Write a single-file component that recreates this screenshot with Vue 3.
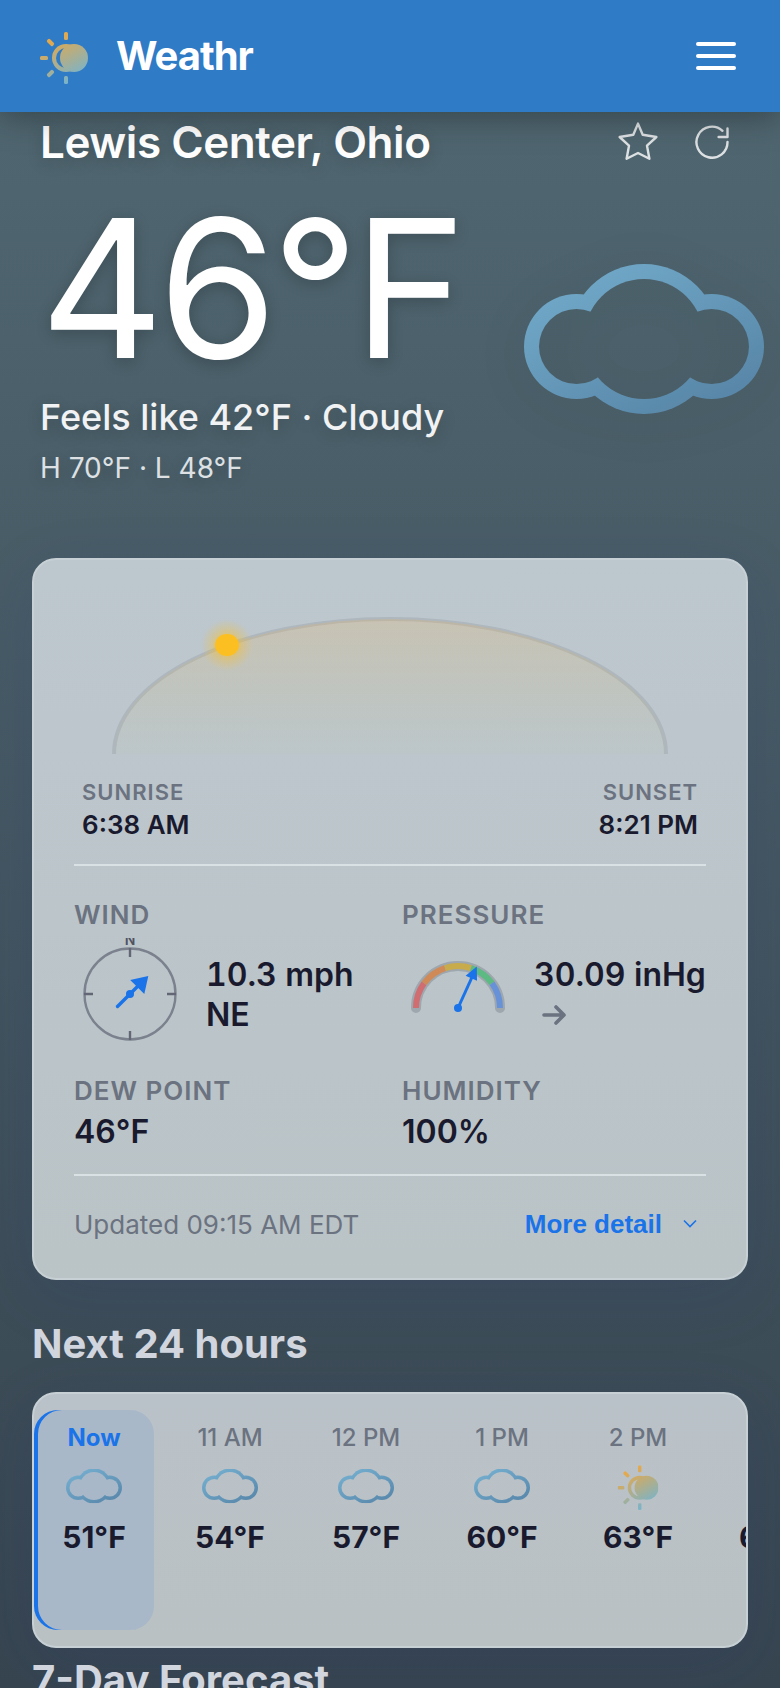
<script setup>
const hours = [
  { label: 'Now', temp: '51°F', icon: 'cloudy', now: true },
  { label: '11 AM', temp: '54°F', icon: 'cloudy' },
  { label: '12 PM', temp: '57°F', icon: 'cloudy' },
  { label: '1 PM', temp: '60°F', icon: 'cloudy' },
  { label: '2 PM', temp: '63°F', icon: 'partly' },
  { label: '3 PM', temp: '64°F', icon: 'partly' }
]

const bands = ['#cf6d71', '#d08a57', '#c8ab4b', '#5cba82', '#6792d8']

function point(deg, r) {
  const a = (deg * Math.PI) / 180
  return `${(56 - r * Math.cos(a)).toFixed(2)} ${(70 - r * Math.sin(a)).toFixed(2)}`
}

const gauge = bands.map((color, i) => ({
  color,
  d: `M${point(i * 36, 42)} A42 42 0 0 1 ${point((i + 1) * 36, 42)}`
}))
</script>

<template>
  <div class="app">
    <!-- shared weather symbols -->
    <svg class="defs" width="0" height="0" aria-hidden="true">
      <defs>
        <linearGradient id="cloud-fill" gradientUnits="userSpaceOnUse" x1="60" y1="0" x2="140" y2="160">
          <stop offset="0" stop-color="#74aecf" />
          <stop offset="1" stop-color="#5a8aad" />
        </linearGradient>
        <linearGradient id="sun-fill" gradientUnits="userSpaceOnUse" x1="14" y1="6" x2="38" y2="50">
          <stop offset="0" stop-color="#eba844" />
          <stop offset="1" stop-color="#73b4d2" />
        </linearGradient>
        <mask id="cloud-mask" maskUnits="userSpaceOnUse" x="0" y="0" width="240" height="150">
          <g fill="#fff">
            <circle cx="52.5" cy="82.5" r="52.5" />
            <circle cx="120" cy="75" r="75" />
            <circle cx="187.5" cy="82.5" r="52.5" />
          </g>
          <g fill="#000">
            <circle cx="52.5" cy="82.5" r="37.5" />
            <circle cx="120" cy="75" r="60" />
            <circle cx="187.5" cy="82.5" r="37.5" />
          </g>
        </mask>
        <mask id="partly-mask" maskUnits="userSpaceOnUse" x="0" y="0" width="48" height="56">
          <g fill="#fff">
            <circle cx="26" cy="28" r="14" />
            <rect x="24" y="2" width="4" height="8" rx="1.5" />
            <rect x="24" y="46" width="4" height="8" rx="1.5" />
            <rect x="0" y="26" width="8" height="4" rx="1.5" />
            <rect x="6.5" y="10.5" width="8" height="4" rx="1.5" transform="rotate(45 10.5 12.5)" />
            <rect x="6.5" y="41.5" width="8" height="4" rx="1.5" transform="rotate(-45 10.5 43.5)" />
          </g>
          <circle cx="26" cy="28" r="10" fill="#000" />
          <circle cx="34" cy="28" r="14" fill="#fff" />
        </mask>
      </defs>
      <symbol id="cloudy" viewBox="0 0 240 150">
        <rect width="240" height="150" fill="url(#cloud-fill)" mask="url(#cloud-mask)" />
      </symbol>
      <symbol id="partly" viewBox="0 -2 48 56">
        <rect width="48" height="56" fill="url(#sun-fill)" mask="url(#partly-mask)" />
      </symbol>
    </svg>

    <header class="topbar">
      <a class="brand" href="#">
        <svg class="brand-icon" aria-hidden="true"><use href="#partly" /></svg>
        <span>Weathr</span>
      </a>
      <button class="menu" type="button" aria-label="Menu">
        <span></span><span></span><span></span>
      </button>
    </header>

    <section class="hero">
      <div class="place">
        <h1>Lewis Center, Ohio</h1>
        <div class="actions">
          <button type="button" aria-label="Add to favorites">
            <svg viewBox="0 0 44 44" aria-hidden="true">
              <path d="M22 3.6 L26.7 14.7 L40.4 17 L31 25.7 L33.4 38.8 L22 33 L10.6 38.8 L13 25.7 L3.6 17 L17.3 14.7 Z" />
            </svg>
          </button>
          <button type="button" aria-label="Refresh">
            <svg viewBox="0 0 44 44" aria-hidden="true">
              <path d="M37.5 22 A15.5 15.5 0 1 1 32.5 10.8 M37.5 8.4 V17 H28.6" />
            </svg>
          </button>
        </div>
      </div>
      <div class="current">
        <div class="reading">
          <p class="temp">46°F</p>
          <p class="feels">Feels like 42°F · Cloudy</p>
          <p class="range">H 70°F · L 48°F</p>
        </div>
        <svg class="hero-icon" role="img" aria-label="Cloudy"><use href="#cloudy" /></svg>
      </div>
    </section>

    <main>
      <section class="card details">
        <svg class="arc" viewBox="0 0 616 160" preserveAspectRatio="none" aria-hidden="true">
          <defs>
            <linearGradient id="day" x1="0" y1="0" x2="0" y2="1">
              <stop offset="0" stop-color="#f5b04a" stop-opacity="0.2" />
              <stop offset="1" stop-color="#c8b850" stop-opacity="0.02" />
            </linearGradient>
            <radialGradient id="glow">
              <stop offset="0.35" stop-color="#fbbf24" stop-opacity="0.5" />
              <stop offset="0.7" stop-color="#fbbf24" stop-opacity="0.2" />
              <stop offset="1" stop-color="#fbbf24" stop-opacity="0" />
            </radialGradient>
          </defs>
          <path d="M32 154 A276 135 0 0 1 584 154" fill="none" stroke="#aeb7bd" stroke-width="4" />
          <path d="M32 154 A276 135 0 0 1 584 154 Z" fill="url(#day)" />
          <circle cx="145" cy="45" r="26" fill="url(#glow)" />
          <ellipse cx="145" cy="45" rx="12" ry="11" fill="#fcbf22" />
        </svg>
        <div class="sun-times">
          <div>
            <div class="small-label">SUNRISE</div>
            <div class="time">6:38 AM</div>
          </div>
          <div class="end">
            <div class="small-label">SUNSET</div>
            <div class="time">8:21 PM</div>
          </div>
        </div>

        <div class="stats">
          <div class="stat">
            <div class="label">WIND</div>
            <div class="instrument">
              <svg viewBox="0 0 112 112" aria-hidden="true">
                <circle cx="56" cy="56" r="45.5" fill="none" stroke="#7b818d" stroke-width="2.4" />
                <path d="M56 10 V19 M56 93 V102 M10 56 H19 M93 56 H102" stroke="#636775" stroke-width="2.4" />
                <text x="56" y="7" class="north">N</text>
                <path d="M43.5 68.5 L66 46" stroke="#1a73e8" stroke-width="3.4" stroke-linecap="round" />
                <circle cx="56" cy="56" r="4" fill="#1a73e8" />
                <path d="M74.3 38 L56.2 42 L70.3 56 Z" fill="#1a73e8" />
              </svg>
              <div class="value">10.3 mph NE</div>
            </div>
          </div>
          <div class="stat">
            <div class="label">PRESSURE</div>
            <div class="instrument">
              <svg viewBox="0 0 112 112" aria-hidden="true">
                <path d="M14 70 A42 42 0 0 1 98 70" fill="none" stroke="#9ea6ae" stroke-width="10" stroke-linecap="round" />
                <path v-for="b in gauge" :key="b.color" :d="b.d" fill="none" :stroke="b.color" stroke-width="6" />
                <path d="M56 70 L71 37" stroke="#1a73e8" stroke-width="3" />
                <circle cx="56" cy="70" r="4" fill="#1a73e8" />
                <path d="M74.8 28.6 L63.6 37.8 L75 42.8 Z" fill="#1a73e8" />
              </svg>
              <div class="value">
                30.09 inHg
                <svg class="trend" viewBox="0 0 24 22" role="img" aria-label="Steady">
                  <path d="M2 11 H21 M14 3 L22 11 L14 19" />
                </svg>
              </div>
            </div>
          </div>
          <div class="stat">
            <div class="label">DEW POINT</div>
            <div class="value">46°F</div>
          </div>
          <div class="stat">
            <div class="label">HUMIDITY</div>
            <div class="value">100%</div>
          </div>
        </div>

        <div class="foot">
          <span class="updated">Updated 09:15 AM EDT</span>
          <button type="button">
            More detail
            <svg viewBox="0 0 16 10" aria-hidden="true"><path d="M2 1.5 L8 7.5 L14 1.5" /></svg>
          </button>
        </div>
      </section>

      <h2>Next 24 hours</h2>
      <ul class="card hours">
        <li v-for="h in hours" :key="h.label" :class="{ now: h.now }">
          <span class="hour">{{ h.label }}</span>
          <svg aria-hidden="true"><use :href="'#' + h.icon" /></svg>
          <strong>{{ h.temp }}</strong>
        </li>
      </ul>

      <h2 class="week">7-Day Forecast</h2>
    </main>
  </div>
</template>

<style>
body {
  margin: 0;
}
</style>

<style scoped>
.app {
  box-sizing: border-box;
  height: 100vh;
  overflow: hidden;
  font-family: Inter, "Liberation Sans", sans-serif;
  color: #1a1a2e;
  background: linear-gradient(#516872, #374550);
}
.defs {
  position: absolute;
}
h1, h2, p, ul {
  margin: 0;
  padding: 0;
}
button {
  border: 0;
  padding: 0;
  background: none;
  cursor: pointer;
}
.topbar {
  position: relative;
  display: flex;
  align-items: center;
  justify-content: space-between;
  height: 112px;
  padding: 0 40px;
  background: #307bc5;
  box-shadow: 0 4px 32px rgba(0, 0, 0, 0.35);
}
.brand {
  display: flex;
  align-items: center;
  gap: 28px;
  color: #fff;
  font-size: 40px;
  line-height: 48px;
  font-weight: 700;
  letter-spacing: -1px;
  text-decoration: none;
}
.brand-icon {
  width: 48px;
  height: 56px;
}
.menu {
  display: flex;
  flex-direction: column;
  gap: 8px;
  padding: 4px;
}
.menu span {
  width: 40px;
  height: 4px;
  border-radius: 2px;
  background: #fff;
}
.hero {
  padding: 4px 40px 0;
  color: #fff;
  text-shadow: 0 4px 16px rgba(0, 0, 0, 0.2);
}
.place,
.current {
  display: flex;
  align-items: center;
  justify-content: space-between;
}
h1 {
  font-size: 44px;
  line-height: 52px;
  font-weight: 600;
  letter-spacing: -0.01em;
}
.actions {
  display: flex;
  gap: 18px;
}
.actions button {
  display: flex;
  justify-content: center;
  width: 56px;
}
.actions svg {
  width: 44px;
  height: 44px;
  fill: none;
  stroke: #dde1e3;
  stroke-width: 2.4;
  stroke-linecap: round;
  stroke-linejoin: round;
}
.current {
  margin-top: 24px;
}
.temp {
  font-size: 192px;
  line-height: 192px;
  letter-spacing: -0.03em;
}
.feels {
  margin-top: 12px;
  font-size: 36px;
  line-height: 42px;
  font-weight: 500;
  color: #f0f2f3;
}
.range {
  margin-top: 12px;
  font-size: 28px;
  line-height: 36px;
  color: #dde1e4;
}
.hero-icon {
  flex: none;
  width: 240px;
  height: 150px;
  margin-right: -24px;
  opacity: 0.94;
  filter: drop-shadow(0 8px 32px rgba(0, 0, 0, 0.12));
}
main {
  padding: 72px 32px 0;
}
.card {
  border: 2px solid #c7d0d4;
  border-radius: 24px;
  background: linear-gradient(#bdc7ce, #bac3c6);
  box-shadow: 0 16px 64px rgba(31, 38, 135, 0.12);
}
.details {
  padding: 40px 40px 38px;
}
.arc {
  display: block;
  box-sizing: border-box;
  width: 100%;
  height: 160px;
  padding: 0 8px;
}
.sun-times {
  display: flex;
  justify-content: space-between;
  padding: 18px 8px 20px;
}
.end {
  text-align: right;
}
.small-label,
.label {
  font-size: 22px;
  line-height: 28px;
  font-weight: 600;
  letter-spacing: 1px;
  color: #6b7280;
}
.time {
  font-size: 26px;
  line-height: 38px;
  font-weight: 600;
}
.stats {
  display: grid;
  grid-template-columns: 1fr 1fr;
  gap: 24px;
  padding: 32px 0 22px;
  border: solid #dae1e4;
  border-width: 2px 0;
}
.label {
  font-size: 26px;
  line-height: 34px;
}
.value {
  padding-top: 4px;
  font-size: 32px;
  line-height: 40px;
  font-weight: 600;
}
.instrument {
  display: flex;
  align-items: center;
  gap: 20px;
  margin-top: 6px;
  font-variant-numeric: tabular-nums;
}
.instrument .value {
  padding-top: 2px;
}
.instrument > svg {
  flex: none;
  width: 112px;
  height: 112px;
  overflow: hidden;
}
.north {
  font-size: 14px;
  font-weight: 600;
  text-anchor: middle;
  fill: #4f5361;
}
.trend {
  width: 24px;
  height: 22px;
  margin-left: 8px;
  fill: none;
  stroke: #6b7280;
  stroke-width: 3.6;
  stroke-linecap: round;
  stroke-linejoin: round;
}
.foot {
  display: flex;
  align-items: center;
  justify-content: space-between;
  padding-top: 32px;
  font-size: 26px;
  line-height: 30px;
  color: #6b7280;
}
.updated {
  padding-top: 2px;
}
.foot button {
  display: flex;
  align-items: center;
  gap: 20px;
  padding-right: 8px;
  font: bold 26px/30px "Liberation Sans", sans-serif;
  color: #1a73e8;
}
.foot button svg {
  width: 16px;
  height: 10px;
  fill: none;
  stroke: #1a73e8;
  stroke-width: 1.6;
}
h2 {
  margin: 40px 0 24px;
  font-size: 40px;
  line-height: 48px;
  font-weight: 700;
  color: #d1d5de;
}
.week {
  margin: 8px 0 0;
}
.hours {
  display: flex;
  gap: 16px;
  padding: 16px 0;
  list-style: none;
  overflow: hidden;
  background: linear-gradient(#bac2c9, #b9c1c3);
}
.hours li {
  flex: none;
  box-sizing: border-box;
  display: flex;
  flex-direction: column;
  align-items: center;
  gap: 8px;
  width: 120px;
  height: 220px;
  padding-top: 12px;
  border-radius: 24px;
}
.hours .now {
  background: #a8b8c9;
  box-shadow: inset 4px 0 0 #1a73e8;
}
.hour {
  font-size: 24px;
  line-height: 32px;
  font-weight: 500;
  color: #6b7280;
}
.now .hour {
  font-weight: 700;
  color: #1a73e8;
}
.hours svg {
  width: 56px;
  height: 48px;
}
.hours strong {
  font-size: 30px;
  line-height: 38px;
  font-weight: 700;
}
</style>
